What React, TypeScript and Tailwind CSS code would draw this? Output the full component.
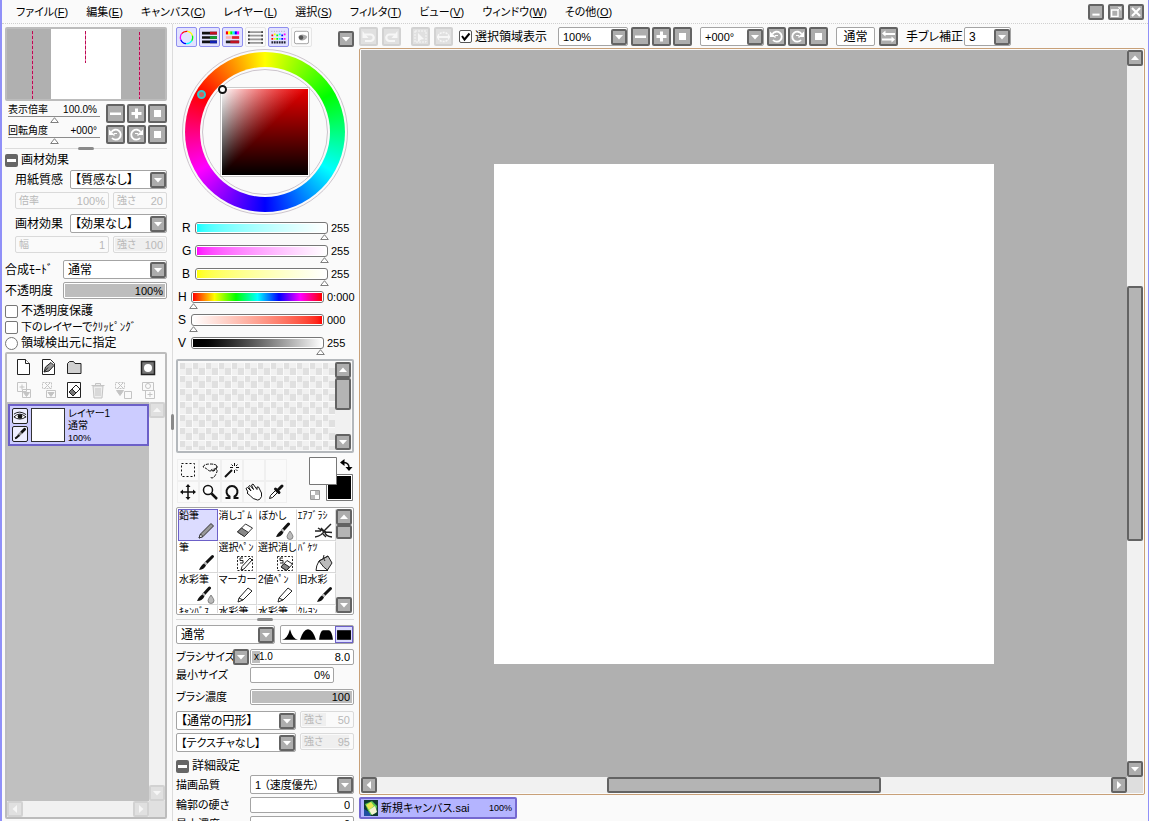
import { useState, type ReactNode } from 'react';
import clsx from 'clsx';

/* ---------- Small glyphs ---------- */

const ICONS: Record<string, ReactNode> = {
  minus: <path d="M2 6.5h11v2.5H2z" />,
  plus: <path d="M2.500 6H6V2.500h3V6h3.500v3H9v3.500H6V9H2.500z" />,
  stop: <path d="M4 4h7v7H4z" />,
  rotateLeft: (
    <>
      <path d="M3.500 5A5 5 0 1 1 4 11" fill="none" stroke="currentColor" strokeWidth="1.800" />
      <path d="M1 2.500v5.500h5.500z" />
      <path d="M6 9V6.500h3" fill="none" stroke="currentColor" />
    </>
  ),
  rotateRight: (
    <>
      <path d="M11.500 5A5 5 0 1 0 11 11" fill="none" stroke="currentColor" strokeWidth="1.800" />
      <path d="M14 2.500v5.500H8.500z" />
      <path d="M9 9V6.500H6" fill="none" stroke="currentColor" />
    </>
  ),
  undo: (
    <>
      <path d="M4 5.500h5.500a3 3 0 0 1 0 6.500H4" fill="none" stroke="currentColor" strokeWidth="2.200" />
      <path d="M1.500 2v7h6z" />
    </>
  ),
  redo: (
    <>
      <path d="M11 5.500H5.500a3 3 0 0 0 0 6.500H11" fill="none" stroke="currentColor" strokeWidth="2.200" />
      <path d="M13.500 2v7h-6z" />
    </>
  ),
  deselect: (
    <>
      <path d="M2 2h11v11H2z" fill="none" stroke="currentColor" strokeDasharray="2 1" />
      <path d="M5 4l6 6-3 .5L5 13z" />
    </>
  ),
  invert: (
    <>
      <path d="M2 7a6 6 0 0 1 11 0M2 9a6 6 0 0 0 11 0" fill="none" stroke="currentColor" strokeDasharray="2 1" strokeWidth="1.500" />
      <path d="M1 7h13v2H1z" />
    </>
  ),
  swap: <path d="M1 4.500L4.500 1.500V4H14v2H4.500v1.500zM14 10.500L10.500 7.500V9.500H1v2h9.500v2z" />,
  down: <path d="M2.500 5h10l-5 5.500z" />,
  up: <path d="M2.500 10h10l-5-5.500z" />,
  left: <path d="M10 2.500v10L4.500 7.500z" />,
  right: <path d="M5 2.500v10l5.500-5z" />,
  minimize: <path d="M3 9.500h9v2.500H3z" />,
  maximize: (
    <>
      <path d="M2 5h8v8H2z" fill="none" stroke="currentColor" strokeWidth="1.800" />
      <path d="M9 6l4-4M10 2h3.500v3.500" fill="none" stroke="currentColor" />
    </>
  ),
  close: <path d="M2.500 2.500l10 10M12.500 2.500l-10 10" stroke="currentColor" strokeWidth="2.600" />,
};

type BtnProps = { icon: string; label: string; small?: boolean; off?: boolean };

function Btn({ icon, label, small, off }: BtnProps) {
  return (
    <button
      type="button"
      aria-label={label}
      disabled={off}
      className={clsx(
        'flex shrink-0 items-center justify-center rounded-xs border-2',
        small ? 'size-4' : 'size-[19px]',
        off ? 'border-[#d2d2d2] bg-[#e0e0e0] text-[#f6f6f6]' : 'border-[#636363] bg-[#adadad] text-white',
      )}
    >
      <svg viewBox="0 0 15 15" className={small ? 'size-3' : 'size-[15px]'} fill="currentColor" aria-hidden>
        {ICONS[icon]}
      </svg>
    </button>
  );
}

function Select({ label, options, className }: { label: string; options: string[]; className?: string }) {
  return (
    <div className={clsx('relative h-[19px] shrink-0', className)}>
      <select
        aria-label={label}
        className="h-full w-full appearance-none rounded-xs border border-[#a4a4a4] bg-white pl-1 pr-4 leading-4 outline-none"
      >
        {options.map((o) => (
          <option key={o}>{o}</option>
        ))}
      </select>
      <span className="pointer-events-none absolute inset-y-0 right-px flex items-center">
        <span className="flex size-4 items-center justify-center rounded-xs border-2 border-[#636363] bg-[#adadad] text-white">
          <svg viewBox="0 0 15 15" className="size-3" fill="currentColor" aria-hidden>
            {ICONS.down}
          </svg>
        </span>
      </span>
    </div>
  );
}

type ValueBoxProps = {
  label: string;
  value: string;
  fill?: number;
  caption?: string;
  off?: boolean;
  tall?: boolean;
  className?: string;
};

function ValueBox({ label, value, fill = 0, caption, off, tall, className }: ValueBoxProps) {
  return (
    <label
      className={clsx(
        'relative flex min-w-0 items-center overflow-hidden rounded-xs border px-[3px] text-[11px]',
        off || tall ? 'h-[17px]' : 'h-4',
        off ? 'border-[#dadada] bg-[#fafafa] text-[#b8b8b8]' : 'border-[#a4a4a4] bg-white text-black',
        className,
      )}
    >
      <span
        className={clsx('absolute inset-y-px left-px', off ? 'bg-[#efefef]' : 'bg-[#bdbdbd]')}
        style={{ width: `calc(${fill}% - 2px)` }}
      />
      {caption && <span className="relative shrink-0 text-[10px] leading-3">{caption}</span>}
      <input
        aria-label={label}
        defaultValue={value}
        disabled={off}
        className="relative w-full min-w-0 bg-transparent text-right leading-3 outline-none"
      />
    </label>
  );
}

function Scrollbar({
  vertical,
  off,
  before = 0,
  thumb = 0,
  after = 1,
}: {
  vertical?: boolean;
  off?: boolean;
  before?: number;
  thumb?: number;
  after?: number;
}) {
  return (
    <div className={clsx('flex shrink-0 bg-[#f1f1f1]', vertical ? 'w-4 flex-col' : 'h-4')}>
      <Btn small off={off} icon={vertical ? 'up' : 'left'} label={vertical ? '上へ' : '左へ'} />
      <div style={{ flex: before }} />
      {thumb > 0 && <div className="rounded-xs border-2 border-[#636363] bg-[#b4b4b4]" style={{ flex: thumb }} />}
      <div style={{ flex: after }} />
      <Btn small off={off} icon={vertical ? 'down' : 'right'} label={vertical ? '下へ' : '右へ'} />
    </div>
  );
}

function Splitter() {
  return (
    <div className="flex h-[3px] shrink-0 items-center">
      <div className="h-px flex-1 bg-[#dcdcdc]" />
      <div className="h-[3px] w-4 rounded-xs bg-[#8a8a8a]" />
      <div className="h-px flex-1 bg-[#dcdcdc]" />
    </div>
  );
}

function SectionHeader({ children }: { children: ReactNode }) {
  return (
    <button type="button" className="flex h-3.5 items-center gap-[3px] text-xs leading-3.5">
      <span className="flex size-[13px] items-center justify-center rounded-xs bg-[#666]">
        <span className="h-[3px] w-[9px] bg-white" />
      </span>
      {children}
    </button>
  );
}

function Triangle() {
  return (
    <svg viewBox="0 0 9 6" className="h-1.5 w-[9px] shrink-0" aria-hidden>
      <path d="M4.500 .7L8.300 5.500H.7z" fill="#fff" stroke="#707070" strokeWidth=".9" />
    </svg>
  );
}

/* ---------- Menu bar ---------- */

const menus = [
  ['ファイル', 'F'],
  ['編集', 'E'],
  ['キャンバス', 'C'],
  ['レイヤー', 'L'],
  ['選択', 'S'],
  ['フィルタ', 'T'],
  ['ビュー', 'V'],
  ['ウィンドウ', 'W'],
  ['その他', 'O'],
];

function MenuBar() {
  return (
    <header className="flex h-6 shrink-0 items-center justify-between border-b border-dotted border-[#cfcfcf] pl-3.5 pr-1 pt-px">
      <nav className="flex gap-[18px] text-[11px]">
        {menus.map(([name, key]) => (
          <button type="button" key={key} className="whitespace-nowrap leading-4">
            {name}(<u>{key}</u>)
          </button>
        ))}
      </nav>
      <div className="flex gap-1">
        <Btn small icon="minimize" label="最小化" />
        <Btn small icon="maximize" label="最大化" />
        <Btn small icon="close" label="閉じる" />
      </div>
    </header>
  );
}

/* ---------- Left column: navigator and layers ---------- */

function ThinSlider({ label, value }: { label: string; value: string }) {
  return (
    <label className="relative flex h-[19px] min-w-0 flex-1 flex-col text-[10px] leading-3">
      <span className="flex justify-between px-[3px]">
        <span>{label}</span>
        <span>{value}</span>
      </span>
      <span className="ml-[3px] h-0.5 bg-[#8c8c8c]" />
      <span className="flex justify-center pl-[3px]">
        <Triangle />
      </span>
      <input type="range" aria-label={label} className="absolute inset-0 h-full w-full opacity-0" />
    </label>
  );
}

function Navigator() {
  return (
    <>
      <div className="flex h-[74px] justify-center rounded-xs border-2 border-[#bcbcbc] bg-[#b0b0b0]">
        <svg viewBox="0 0 158 70" className="h-full w-full" preserveAspectRatio="xMidYMid slice" aria-hidden>
          <path d="M44 0h70v70h-70z" fill="#fff" />
          <g fill="#f070a8">
            <path d="M25 2h1v68h-1zM78 2h1v32h-1zM132 3h1v67h-1z" />
          </g>
          <g stroke="#b80c50" strokeDasharray="3 2">
            <path d="M25.500 2v68" />
            <path d="M78.500 2v32" />
            <path d="M132.500 3v67" />
          </g>
        </svg>
      </div>
      <div className="mt-[3px] flex flex-col gap-0.5">
        <div className="flex gap-0.5">
          <ThinSlider label="表示倍率" value="100.0%" />
          <span className="w-0.5" />
          <Btn icon="minus" label="縮小" />
          <Btn icon="plus" label="拡大" />
          <Btn icon="stop" label="等倍" />
        </div>
        <div className="flex gap-0.5">
          <ThinSlider label="回転角度" value="+000°" />
          <span className="w-0.5" />
          <Btn icon="rotateLeft" label="左回転" />
          <Btn icon="rotateRight" label="右回転" />
          <Btn icon="stop" label="回転リセット" />
        </div>
      </div>
    </>
  );
}

function EffectRow({ name, option }: { name: string; option: string }) {
  return (
    <div className="flex items-center justify-between pl-2.5">
      <span className="leading-4">{name}</span>
      <Select label={name} options={[option]} className="w-[97px]" />
    </div>
  );
}

const layerIcons: (ReactNode | null)[] = [
  <g key="new" stroke="#222" fill="#fff">
    <path d="M2.500 1.500h8l4 4v11h-12z" />
    <path d="M10.500 1.500v4h4" />
  </g>,
  <g key="pen" stroke="#222" fill="#fff">
    <path d="M2.500 1.500h8l4 4v11h-12z" />
    <path d="M4 14l1.500-5L11 4.500l3 3L9 13z" fill="#999" />
    <path d="M4 14l4-4.500" />
  </g>,
  <path key="folder" d="M2.500 15.500v-10l2-2h4l1.500 2h6v10z" stroke="#222" fill="#d0d0d0" />,
  null,
  null,
  <g key="mask" stroke="#222">
    <path d="M2.500 3.500h13v13h-13z" fill="#777" strokeWidth="1.500" />
    <circle cx="9" cy="10" r="4" fill="#fff" stroke="none" />
  </g>,
  <g key="transfer" stroke="#c4c4c4" fill="#fafafa">
    <path d="M2.500 1.500h9v9h-9zM7.500 8.500h8v8h-8zM4.500 6h5M7 3.500v5" />
    <path d="M8.500 11.500h6l-3 4z" fill="#c4c4c4" />
  </g>,
  <g key="merge" stroke="#c4c4c4" fill="#fafafa">
    <path d="M2.500 1.500h9v6h-9z" strokeDasharray="2 1" />
    <path d="M5 2l5 5M5 7l5-5M6.500 9.500h9v7h-9z" />
    <path d="M8 11.500h6l-3 4z" fill="#c4c4c4" />
  </g>,
  <g key="clear" stroke="#222" fill="#fff">
    <path d="M2.500 1.500h13v15h-13z" />
    <path d="M4 11l7-7 4 4-7 7z" />
    <path d="M4 11l3-3 4 4-3 3z" fill="#777" />
  </g>,
  <g key="trash" stroke="#c4c4c4" fill="#eee">
    <path d="M2.500 4.500h13M6.500 4V2.500h5V4M4 5l1 12h8l1-12z" />
    <path d="M7 7v8M9 7v8M11 7v8" />
  </g>,
  <g key="stamp" stroke="#c4c4c4" fill="#fafafa">
    <path d="M1.500 1.500h9v6h-9z" strokeDasharray="2 1" />
    <path d="M4 2l5 5M4 7l5-5M10.500 10.500h7v7h-7z" />
    <path d="M2.500 9.500h7l-3.500 5z" fill="#c4c4c4" />
  </g>,
  <g key="addmask" stroke="#c4c4c4" fill="#fafafa">
    <path d="M3.500 1.500h11v8h-11zM6.500 9.500h9v8h-9zM8.500 13.500h5M11 11v5" />
    <circle cx="9" cy="5" r="2.500" />
  </g>,
];

const layerLabels = [
  '新規レイヤー',
  '新規ペン入れレイヤー',
  '新規レイヤーセット',
  '',
  '',
  'マスク',
  '下に転写',
  '下と結合',
  'クリア',
  '削除',
  'スタンプ',
  'マスク追加',
];

function LayerPanel() {
  return (
    <section className="mt-px mb-0.5 flex min-h-0 flex-1 flex-col rounded-xs border-2 border-[#bcbcbc]">
      <div className="grid h-12 shrink-0 grid-cols-6 items-center justify-items-center px-[5px] pt-px">
        {layerIcons.map((icon, i) =>
          icon ? (
            <button type="button" key={i} aria-label={layerLabels[i]} className="size-[18px]">
              <svg viewBox="0 0 18 18" aria-hidden>
                {icon}
              </svg>
            </button>
          ) : (
            <span key={i} />
          ),
        )}
      </div>
      <div className="flex min-h-0 flex-1">
        <ul className="flex-1 bg-[#c0c0c0] pl-px pt-0.5">
          <li className="flex h-[42px] gap-[3px] border-2 border-[#6c60c8] bg-[#ccccff] p-0.5 text-[10px] leading-3">
            <div className="flex flex-col justify-between">
              <button type="button" aria-label="表示" className="size-4 rounded-xs border border-[#222] bg-[#eeeeff]">
                <svg viewBox="0 0 15 15" aria-hidden>
                  <path d="M1 8.500Q7 2.500 14 8.500Q7 13 1 8.500z" fill="#fff" stroke="#111" />
                  <path d="M1 5.500Q7 1 14 6" fill="none" stroke="#111" />
                  <circle cx="7.500" cy="8" r="2.500" fill="#111" />
                </svg>
              </button>
              <button type="button" aria-label="編集対象" className="size-4 rounded-xs border border-[#222] bg-[#eeeeff]">
                <svg viewBox="0 0 15 15" aria-hidden>
                  <path d="M12.500 2.500L9 6" stroke="#111" strokeWidth="3" strokeLinecap="round" />
                  <path d="M9 6L5.500 9.500" stroke="#888" strokeWidth="3" />
                  <path d="M6 8l1.500 1.500L4 12.500 2 13l.5-2z" fill="#111" />
                </svg>
              </button>
            </div>
            <div className="w-[34px] border border-[#333] bg-white" />
            <div className="whitespace-nowrap">
              <p>レイヤー1</p>
              <p>通常</p>
              <p className="text-[9px]">100%</p>
            </div>
          </li>
        </ul>
        <Scrollbar vertical off />
      </div>
      <div className="flex bg-[#e0e0e0] pr-4">
        <div className="flex flex-1 flex-col">
          <Scrollbar off />
        </div>
      </div>
    </section>
  );
}

function LayerColumn() {
  return (
    <aside className="relative flex w-[171px] shrink-0 flex-col border-r border-[#dcdcdc] pl-[3px] pr-[5px] pt-[3px]">
      <Navigator />
      <div className="my-[3px]">
        <Splitter />
      </div>
      <SectionHeader>画材効果</SectionHeader>
      <div className="mt-[3px] flex flex-col gap-[3px]">
        <EffectRow name="用紙質感" option="【質感なし】" />
        <div className="flex gap-1 pl-2.5">
          <ValueBox off label="用紙質感 倍率" caption="倍率" value="100%" className="flex-1" />
          <ValueBox off label="用紙質感 強さ" caption="強さ" value="20" className="w-[54px]" />
        </div>
      </div>
      <div className="mt-[5px] flex flex-col gap-[3px]">
        <EffectRow name="画材効果" option="【効果なし】" />
        <div className="flex gap-1 pl-2.5">
          <ValueBox off label="画材効果 幅" caption="幅" value="1" className="flex-1" />
          <ValueBox off label="画材効果 強さ" caption="強さ" value="100" fill={100} className="w-[54px]" />
        </div>
      </div>
      <div className="mt-[7px] flex items-center justify-between">
        <span className="leading-4">合成ﾓｰﾄﾞ</span>
        <Select label="合成モード" options={['通常']} className="w-[104px]" />
      </div>
      <div className="mt-[3px] mb-1 flex items-center justify-between">
        <span className="leading-4">不透明度</span>
        <ValueBox tall label="不透明度" value="100%" fill={100} className="w-[104px]" />
      </div>
      <label className="flex h-4 items-center gap-[3px]">
        <input type="checkbox" className="size-[13px] appearance-none rounded-xs border border-[#777] bg-white" />
        不透明度保護
      </label>
      <label className="flex h-4 items-center gap-[3px] whitespace-nowrap text-[11px]">
        <input type="checkbox" className="size-[13px] appearance-none rounded-xs border border-[#777] bg-white" />
        下のレイヤーでｸﾘｯﾋﾟﾝｸﾞ
      </label>
      <label className="flex h-4 items-center gap-[3px]">
        <input type="radio" className="size-[13px] appearance-none rounded-full border border-[#777] bg-white" />
        領域検出元に指定
      </label>
      <LayerPanel />
      <div className="absolute -right-0.5 top-[390px] h-4 w-[3px] rounded-xs bg-[#8a8a8a]" />
    </aside>
  );
}

/* ---------- Middle column: colour and brushes ---------- */

const HUES = ['#f00', '#ff0', '#0f0', '#0ff', '#00f', '#f0f'];

const panelToggles: { label: string; on: boolean; art: ReactNode }[] = [
  {
    label: 'カラーサークル',
    on: true,
    art: (
      <g fill="none" strokeWidth="1.500">
        {HUES.map((c, i) => (
          <circle key={c} cx="8.500" cy="8.500" r="7" stroke={c} strokeDasharray="7.400 36.600" strokeDashoffset={-7.33 * i + 18} />
        ))}
      </g>
    ),
  },
  {
    label: 'RGBスライダー',
    on: true,
    art: (
      <>
        <path d="M0 2h17v3H0zM0 7h17v3H0zM0 12h17v3H0z" fill="#111" />
        <path d="M9 2h8v3H9z" fill="#c01020" />
        <path d="M9 7h8v3H9z" fill="#10a030" />
        <path d="M9 12h8v3H9z" fill="#1020b0" />
      </>
    ),
  },
  {
    label: 'HSVスライダー',
    on: true,
    art: (
      <>
        {HUES.map((c, i) => (
          <path key={c} d={`M${1 + i * 2.5} 1.500h2.500v3.500h-2.500z`} fill={c} />
        ))}
        <path d="M1 7h15v3H1z" fill="#f8b0b0" />
        <path d="M8 7h8v3H8z" fill="#e02030" />
        <path d="M1 12h15v3H1z" fill="#222" />
        <path d="M6 12h10v3H6z" fill="#c01020" />
      </>
    ),
  },
  {
    label: '中間色バー',
    on: false,
    art: (
      <>
        <path d="M0 2.500h17M0 6.500h17M0 10.500h17M0 14.500h17" stroke="#999" strokeWidth="2" />
        <path d="M0 2.500h2M0 6.500h2M0 10.500h2M0 14.500h2M15 2.500h2M15 6.500h2M15 10.500h2M15 14.500h2" stroke="#444" strokeWidth="2" />
      </>
    ),
  },
  {
    label: 'スウォッチ',
    on: true,
    art: (
      <>
        {HUES.map((c, i) => (
          <path key={c} d={`M${0.5 + i * 2.8} ${5 - (i % 2)}h2v2h-2zM${0.5 + i * 2.8} 9h2v2h-2z`} fill={c} />
        ))}
        <path d="M.5 14h16" stroke="#223" strokeWidth="2.500" strokeDasharray="2 .8" />
        <path d="M.5 1.500h16" stroke="#99a" strokeDasharray="1 1.800" />
      </>
    ),
  },
  {
    label: 'スクラッチパッド',
    on: false,
    art: (
      <>
        <rect x=".5" y="1.500" width="16" height="14" rx="2" fill="#fff" stroke="#999" />
        <path d="M5 7q3-3 8-1t-3 6q-5 0-5-5z" fill="#aaa" />
        <circle cx="8" cy="8.500" r="2.500" fill="#555" />
      </>
    ),
  },
];

function ColorWheel() {
  return (
    <div className="relative mt-0.5 ml-1.5 size-[166px] shrink-0 rounded-full border border-[#ccc4cc] p-0.5">
      <div className="flex size-full items-center justify-center rounded-full bg-[conic-gradient(from_-60deg,#f00,#ff0,#0f0,#0ff,#00f,#f0f,#f00)]">
        <div className="flex size-[130px] items-center justify-center rounded-full bg-[#fafafa] p-0.5">
          <div className="flex size-full items-center justify-center rounded-full border border-[#ccc4cc]">
            <div className="border border-[#ccc] bg-white p-px">
              <div className="size-[86px] bg-[linear-gradient(to_bottom,transparent,#000),conic-gradient(from_0deg_at_0%_100%,#fff_0deg,#e80000_45deg)]" />
            </div>
          </div>
        </div>
      </div>
      <span className="absolute left-[14px] top-10 size-[9px] rounded-full border-2 border-[#30c8c8] bg-[#d06060]" />
      <span className="absolute left-[35px] top-[35px] size-[9px] rounded-full border-2 border-[#111] bg-white" />
    </div>
  );
}

const channels = [
  { name: 'R', start: 255, text: '255', max: 255, bar: 'bg-linear-to-r from-[#00ffff] to-white' },
  { name: 'G', start: 255, text: '255', max: 255, bar: 'bg-linear-to-r from-[#ff00ff] to-white' },
  { name: 'B', start: 255, text: '255', max: 255, bar: 'bg-linear-to-r from-[#ffff00] to-white' },
  { name: 'H', start: 0, text: '0:000', max: 360, bar: 'bg-[linear-gradient(to_right,#f00,#ff0,#0f0,#0ff,#00f,#f0f,#f00)]' },
  { name: 'S', start: 0, text: '000', max: 255, bar: 'bg-linear-to-r from-white to-[#ff0000]' },
  { name: 'V', start: 255, text: '255', max: 255, bar: 'bg-linear-to-r from-black to-white' },
];

function ChannelSlider({ name, start, text, max, bar }: (typeof channels)[number]) {
  const [value, setValue] = useState(start);
  const hsv = 'HSV'.includes(name);
  return (
    <label className={clsx('flex h-[23px] leading-4', hsv ? 'pl-0.5' : 'pl-1.5')}>
      <span className="w-[13px] shrink-0">{name}</span>
      <span className="relative w-[133px] shrink-0 pt-0.5">
        <span className="block h-3 rounded-[3px] border border-[#777] bg-white p-px">
          <span className={clsx('block h-full', bar)} />
        </span>
        <span className="-mx-0.5 flex">
          <span style={{ width: `${(value / max) * 93}%` }} />
          <Triangle />
        </span>
        <input
          type="range"
          aria-label={name}
          min={0}
          max={max}
          value={value}
          onChange={(e) => setValue(Number(e.target.value))}
          className="absolute inset-0 h-full w-full opacity-0"
        />
      </span>
      <span className="pl-[3px] text-[11px]">{value === start ? text : value}</span>
    </label>
  );
}

const tools: { label: string; art: ReactNode }[] = [
  { label: '選択範囲', art: <path d="M2.500 2.500h13v13h-13z" strokeDasharray="2 2" /> },
  {
    label: '投げ縄',
    art: <path d="M2 6q1-3 7-3t7 2-3 4-6 0-5-3M16 5q-2 6-5 5t2-2 2 5-6 3" strokeDasharray="3 1" />,
  },
  {
    label: '自動選択',
    art: (
      <>
        <path d="M2 16l7-7" strokeWidth="2" />
        <path d="M11.500 2v3M11.500 9v3M7 6.500h3M13 6.500h3M8.500 3.500l1.500 1.500M14.500 3.500L13 5M14.500 10L13 8.500" />
      </>
    ),
  },
  { label: '', art: null },
  { label: '', art: null },
  {
    label: '移動',
    art: (
      <>
        <path d="M9 3v12M3 9h12" strokeWidth="1.500" />
        <path d="M9 1l2.500 3h-5zM9 17l2.500-3h-5zM1 9l3-2.500v5zM17 9l-3-2.500v5z" fill="#111" stroke="none" />
      </>
    ),
  },
  {
    label: 'ズーム',
    art: (
      <>
        <circle cx="7" cy="7" r="4.500" strokeWidth="1.500" fill="#fff" />
        <path d="M10.500 10.500L16 16" strokeWidth="2.500" />
      </>
    ),
  },
  { label: '回転', art: <path d="M2.500 15h4v-1.500a5.500 5.500 0 1 1 5 0V15h4" strokeWidth="2" /> },
  {
    label: 'ハンド',
    art: (
      <path d="M3 9L1 5.500l1.500-1L6 8 3.500 3.500 5 2.500l3.500 4L6.500 2 8 1l4 5.500V4l1.500 0 3 6q1 4-2 6.500l-2 .5q-5-1-7-4L2 10z" fill="#fff" />
    ),
  },
  {
    label: 'スポイト',
    art: (
      <>
        <path d="M2.500 15.500l1-3L9 7l2 2-5.500 5.500z" fill="#fff" />
        <path d="M8.500 6l3.500 3.500M10 8l5-5" strokeWidth="3" strokeLinecap="round" />
      </>
    ),
  },
];

function ToolBox() {
  return (
    <div className="mt-1.5 flex h-[44px] shrink-0 justify-between">
      <div className="grid grid-cols-[repeat(5,22px)] grid-rows-[repeat(2,22px)] pl-px">
        {tools.map((t, i) => (
          <button
            type="button"
            key={i}
            aria-label={t.label || '空き'}
            className="flex items-center justify-center border border-[#f0f0f0]"
          >
            <svg viewBox="0 0 18 18" className="size-[18px]" fill="none" stroke="#111" aria-hidden>
              {t.art}
            </svg>
          </button>
        ))}
      </div>
      <svg viewBox="0 0 46 44" className="w-[46px] overflow-visible" aria-label="描画色" role="img">
        <path d="M18.500 15.500h26v26h-26z" fill="#fff" stroke="#777" />
        <path d="M20 17h23v23H20z" />
        <path d="M1.500 -1.500h27v27h-27z" fill="#fff" stroke="#777" />
        <path d="M2.500 31.500h9v9h-9z" fill="#fff" stroke="#999" />
        <path d="M7 32h4v4H7zM3 36h4v4H3z" fill="#bbb" />
        <path d="M35 3.500q6 0 6 5" fill="none" stroke="#111" strokeWidth="1.500" />
        <path d="M36.500 0v7L32 3.500zM37.500 8h7L41 12z" />
      </svg>
    </div>
  );
}

const art = {
  pencil: (
    <>
      <path d="M2 16l1.500-4L14 1.500l2.500 2.500L6 14.500z" fill="#999" stroke="#333" />
      <path d="M2 16l1.500-4L6 14.500z" fill="#fff" stroke="#333" />
    </>
  ),
  eraser: (
    <>
      <path d="M1.500 10l8-8 7 4-8 8.500z" fill="#fff" stroke="#333" />
      <path d="M1.500 10l4-4 7 4.500-4 4z" fill="#888" stroke="#333" />
    </>
  ),
  brush: (
    <>
      <path d="M15.500 2.500L9 9" stroke="#111" strokeWidth="3" strokeLinecap="round" />
      <path d="M9.500 8.500l-2 2" stroke="#bbb" strokeWidth="3" />
      <path d="M7 9.500Q4 11 2 16 7 15.500 9 11.500z" fill="#111" />
    </>
  ),
  wet: (
    <>
      <path d="M12.500 2L7 8" stroke="#111" strokeWidth="3" strokeLinecap="round" />
      <path d="M7.500 7.500l-2 2" stroke="#bbb" strokeWidth="3" />
      <path d="M5.500 8.500Q2 10 0 15q5 0 7.500-4.500z" fill="#111" />
      <path d="M14 9q-3 4-3 5.500a3 3 0 0 0 6 0Q17 13 14 9z" fill="#bbb" stroke="#666" strokeWidth=".7" />
    </>
  ),
  air: (
    <path d="M0 15q7-1 10-7l6-6M3 6l5 3 3 1 6 .5M0 9h6M6 6l3 3M10 10q0 4 7 5M8 12l3 3" stroke="#222" strokeWidth="1.400" fill="none" />
  ),
  selPen: (
    <>
      <path d="M1.500 2.500h15v14h-15z" fill="none" stroke="#222" strokeDasharray="2 1.500" />
      <path d="M5 16l1-3.500L14 4l2 2-8 9z" fill="#fff" stroke="#222" />
      <path d="M7 4H4v2.500h3V9H4" fill="none" stroke="#222" />
    </>
  ),
  selEraser: (
    <>
      <path d="M1.500 2.500h15v14h-15z" fill="none" stroke="#222" strokeDasharray="2 1.500" />
      <path d="M5 13l6-6.500 5.500 3.500-6 6.500z" fill="#fff" stroke="#222" />
      <path d="M5 13l3-3.500 5.500 3.500-3 3.500z" fill="#888" stroke="#222" />
      <path d="M7 4H4v2.500h3V9H4" fill="none" stroke="#222" />
    </>
  ),
  bucket: (
    <>
      <path d="M4 7l9-5 4 7-4.500 7H8z" fill="#bbb" stroke="#222" />
      <path d="M9 1q-2 3 1 6M4 7l9-5" fill="none" stroke="#222" />
      <path d="M4 7q-3 5-3 9.500h12q-4-2-9-9.500z" fill="#fff" stroke="#222" />
    </>
  ),
  marker: (
    <>
      <path d="M2 16l1-4L12 2l4 3L7 14z" fill="#fff" stroke="#222" />
      <path d="M3 12l4 2" stroke="#222" />
    </>
  ),
};

const brushes: { name: string; icon: keyof typeof art }[] = [
  { name: '鉛筆', icon: 'pencil' },
  { name: '消しｺﾞﾑ', icon: 'eraser' },
  { name: 'ぼかし', icon: 'wet' },
  { name: 'ｴｱﾌﾞﾗｼ', icon: 'air' },
  { name: '筆', icon: 'brush' },
  { name: '選択ﾍﾟﾝ', icon: 'selPen' },
  { name: '選択消し', icon: 'selEraser' },
  { name: 'ﾊﾞｹﾂ', icon: 'bucket' },
  { name: '水彩筆', icon: 'wet' },
  { name: 'マーカー', icon: 'marker' },
  { name: '2値ﾍﾟﾝ', icon: 'marker' },
  { name: '旧水彩', icon: 'brush' },
  { name: 'ｷｬﾝﾊﾞｽ', icon: 'brush' },
  { name: '水彩筆', icon: 'brush' },
  { name: '水彩筆', icon: 'brush' },
  { name: 'ｸﾚﾖﾝ', icon: 'pencil' },
];

function BrushGrid() {
  return (
    <div className="mt-1 mb-[3px] flex h-[108px] shrink-0 rounded-xs border border-[#a4a4a4] bg-white p-px">
      <div className="grid flex-1 auto-rows-[32px] grid-cols-4 overflow-hidden text-[10px] leading-3">
        {brushes.map((b, i) => (
          <button
            type="button"
            key={i}
            className={clsx(
              'relative flex flex-col items-start overflow-hidden whitespace-nowrap border',
              i === 0 ? 'border-[#6c60c8] bg-[#dcdcff]' : 'border-transparent border-r-[#d8d8d8] border-b-[#d8d8d8]',
            )}
          >
            {b.name}
            <svg viewBox="0 0 18 18" className="absolute right-0.5 bottom-0 size-[18px]" aria-hidden>
              {art[b.icon]}
            </svg>
          </button>
        ))}
      </div>
      <Scrollbar vertical before={0} thumb={10} after={60} />
    </div>
  );
}

const edgeShapes = ['M0 12q5-1 7.500-10 2.500 9 7.500 10z', 'M0 12Q3 2 7.500 2T15 12z', 'M1 12Q2 3 5 3h5q3 0 4 9z', 'M1 3h13v9H1z'];

function BrushSettings() {
  return (
    <div className="flex flex-col pt-1 text-[11px]">
      <div className="flex justify-between">
        <Select label="ブラシモード" options={['通常']} className="w-[99px] text-xs" />
        <div className="flex h-[19px] rounded-xs border border-[#a4a4a4] bg-white">
          {edgeShapes.map((d, i) => (
            <button
              type="button"
              key={d}
              aria-label={`ブラシ形状 ${i + 1}`}
              className={clsx('w-[18px] border', i === 3 ? 'border-[#6c60c8] bg-[#dcdcff]' : 'border-transparent')}
            >
              <svg viewBox="0 0 15 15" aria-hidden>
                <path d={d} />
              </svg>
            </button>
          ))}
        </div>
      </div>
      <div className="mt-[5px] flex items-center">
        <span className="w-[57px] shrink-0 whitespace-nowrap leading-4">ブラシサイズ</span>
        <Btn small icon="down" label="倍率" />
        <ValueBox label="ブラシサイズ" caption="x1.0" value="8.0" fill={10} className="ml-auto w-[104px]" />
      </div>
      <div className="mt-0.5 flex items-center">
        <span className="w-[74px] leading-4">最小サイズ</span>
        <ValueBox label="最小サイズ" value="0%" className="w-[84px]" />
      </div>
      <div className="mt-1.5 flex items-center justify-between">
        <span className="leading-4">ブラシ濃度</span>
        <ValueBox label="ブラシ濃度" value="100" fill={100} className="w-[104px]" />
      </div>
      <div className="mt-1.5 flex flex-col gap-[3px]">
        <div className="flex justify-between">
          <Select label="ブラシ形状" options={['【通常の円形】']} className="w-[120px] text-xs" />
          <ValueBox off label="形状 強さ" caption="強さ" value="50" fill={50} className="w-[54px]" />
        </div>
        <div className="flex justify-between">
          <Select label="テクスチャ" options={['【テクスチャなし】']} className="w-[120px]" />
          <ValueBox off label="テクスチャ 強さ" caption="強さ" value="95" fill={95} className="w-[54px]" />
        </div>
      </div>
      <div className="mt-[7px] mb-0.5 flex">
        <SectionHeader>詳細設定</SectionHeader>
      </div>
      <div className="flex items-center justify-between">
        <span className="leading-4">描画品質</span>
        <Select label="描画品質" options={['1 （速度優先）']} className="w-[104px]" />
      </div>
      <div className="mt-[3px] flex items-center justify-between">
        <span className="leading-4">輪郭の硬さ</span>
        <ValueBox label="輪郭の硬さ" value="0" className="w-[104px]" />
      </div>
      <div className="mt-[3px] flex items-center justify-between">
        <span className="leading-4">最小濃度</span>
        <ValueBox label="最小濃度" value="0" className="w-[104px]" />
      </div>
    </div>
  );
}

function ColorColumn() {
  return (
    <aside className="flex w-[186px] shrink-0 flex-col overflow-hidden pl-[3px] pr-[5px] pt-[3px]">
      <div className="flex h-5 shrink-0 items-end gap-0.5">
        {panelToggles.map((p) => (
          <button
            type="button"
            key={p.label}
            aria-label={p.label}
            aria-pressed={p.on}
            className={clsx(
              'flex h-5 w-[21px] items-center justify-center rounded-xs border',
              p.on ? 'border-[#8f8fee] bg-[#e2e2ff]' : 'border-[#e6e6e6]',
            )}
          >
            <svg viewBox="0 0 17 17" className="size-[15px]" aria-hidden>
              {p.art}
            </svg>
          </button>
        ))}
        <span className="flex-1" />
        <Btn small icon="down" label="パネルメニュー" />
      </div>
      <ColorWheel />
      <div className="mt-[5px] flex shrink-0 flex-col">
        {channels.map((c) => (
          <ChannelSlider key={c.name} {...c} />
        ))}
      </div>
      <div className="mt-px flex h-[94px] shrink-0 rounded-xs border-2 border-[#b4b8bc] p-px">
        <div className="flex-1 bg-[linear-gradient(to_right,#fafafa_1px,transparent_1px),linear-gradient(to_bottom,#fafafa_1px,transparent_1px),repeating-conic-gradient(#f1f1f1_0_25%,#e0e0e0_0_50%)] bg-size-[13px_13px]" />
        <Scrollbar vertical before={0} thumb={30} after={26} />
      </div>
      <ToolBox />
      <BrushGrid />
      <Splitter />
      <BrushSettings />
    </aside>
  );
}

/* ---------- Canvas area ---------- */

function Toolbar() {
  return (
    <div className="flex h-[19px] shrink-0 items-center whitespace-nowrap">
      <div className="flex gap-1">
        <Btn off icon="undo" label="元に戻す" />
        <Btn off icon="redo" label="やり直し" />
      </div>
      <div className="ml-2.5 flex gap-1">
        <Btn off icon="deselect" label="選択解除" />
        <Btn off icon="invert" label="選択反転" />
      </div>
      <label className="ml-1.5 flex w-[99px] items-center gap-[3px] leading-4">
        <span className="relative flex">
          <input type="checkbox" defaultChecked className="peer size-[13px] appearance-none rounded-xs border border-[#555] bg-white" />
          <svg viewBox="0 0 13 13" className="pointer-events-none absolute inset-0 hidden peer-checked:block" aria-hidden>
            <path d="M3 6l2.500 3.500L10.500 3.500" fill="none" stroke="#000" strokeWidth="2" />
          </svg>
        </span>
        選択領域表示
      </label>
      <Select label="表示倍率" options={['100%']} className="w-[70px] text-[11px]" />
      <div className="ml-[3px] flex gap-0.5">
        <Btn icon="minus" label="縮小" />
        <Btn icon="plus" label="拡大" />
        <Btn icon="stop" label="等倍" />
      </div>
      <Select label="回転角度" options={['+000°']} className="ml-2 w-16 text-[11px]" />
      <div className="ml-[3px] flex gap-0.5">
        <Btn icon="rotateLeft" label="左回転" />
        <Btn icon="rotateRight" label="右回転" />
        <Btn icon="stop" label="回転リセット" />
      </div>
      <button type="button" className="ml-2 h-[19px] w-[39px] rounded-xs border border-[#a4a4a4] bg-white leading-4">
        通常
      </button>
      <span className="ml-1 flex">
        <Btn icon="swap" label="左右反転" />
      </span>
      <span className="ml-2 w-[58px] leading-4">手ブレ補正</span>
      <Select label="手ブレ補正" options={['3']} className="w-[47px]" />
    </div>
  );
}

function CanvasArea() {
  return (
    <main className="flex min-w-0 flex-1 flex-col pr-[3px] pt-[3px]">
      <Toolbar />
      <div className="mt-0.5 flex min-h-0 flex-1 flex-col rounded-xs border border-[#c8a078] p-px">
        <div className="flex min-h-0 flex-1">
          <div className="flex flex-1 items-center justify-center overflow-hidden bg-[#b0b0b0]">
            <div className="size-[500px] shrink-0 bg-white" />
          </div>
          <Scrollbar vertical before={221} thumb={252} after={221} />
        </div>
        <div className="flex bg-[#dedede] pr-4">
          <div className="flex flex-1 flex-col">
            <Scrollbar before={230} thumb={270} after={230} />
          </div>
        </div>
      </div>
      <div className="flex shrink-0 py-0.5">
        <button
          type="button"
          className="flex h-[22px] w-[158px] items-center gap-[3px] rounded-xs border-2 border-[#7468d0] bg-[#b4b4ff] px-[3px] text-[11px] leading-4"
        >
          <svg viewBox="0 0 14 16" className="h-4 w-3.5" aria-hidden>
            <path d="M0 0h14v16H0z" fill="#103830" />
            <path d="M1 4L8 1l5 5-1 7-6 2z" fill="#58c850" />
            <path d="M2 5l5-3 3 4-5 4z" fill="#e8e850" />
            <path d="M5 10l6-4 2 6-5 3z" fill="#f4f4d0" />
            <path d="M0 9l5 3 2 4H0z" fill="#2050a0" />
          </svg>
          <span>新規キャンバス.sai</span>
          <span className="ml-auto text-[9px]">100%</span>
        </button>
      </div>
    </main>
  );
}

export default function App() {
  return (
    <div className="flex h-screen flex-col overflow-hidden border-l-2 border-r border-[#9090f8] bg-[#fafafa] font-['Liberation_Sans','Noto_Sans_CJK_JP',sans-serif] text-xs text-black [font-feature-settings:'palt']">
      <MenuBar />
      <div className="flex min-h-0 flex-1">
        <LayerColumn />
        <ColorColumn />
        <CanvasArea />
      </div>
    </div>
  );
}
